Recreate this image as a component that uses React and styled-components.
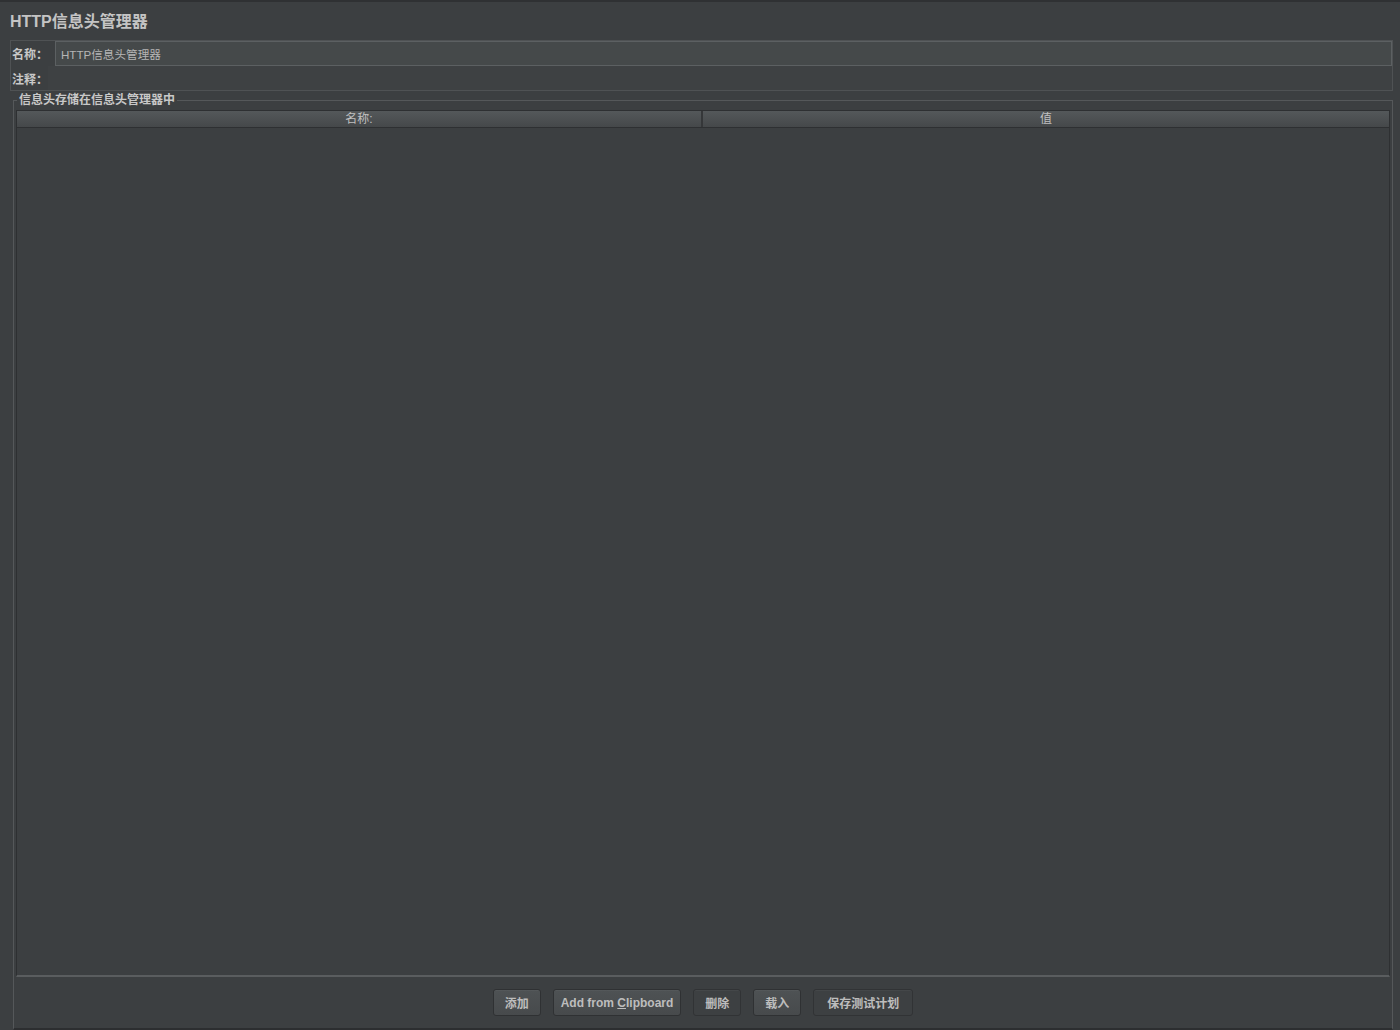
import React from "react";
import styled, { createGlobalStyle } from "styled-components";

const GlobalStyle = createGlobalStyle`
  html, body {
    margin: 0;
    padding: 0;
    background: #3c3f41;
  }
  * {
    box-sizing: border-box;
  }
`;

const FONT = `"Liberation Sans", "Noto Sans CJK SC", sans-serif`;

const Page = styled.div`
  width: 1400px;
  height: 1030px;
  background: #3c3f41;
  border-top: 2px solid #2f3133;
  padding: 0 7px 0 10px;
  display: flex;
  flex-direction: column;
  font-family: ${FONT};
  font-size: 12px;
  color: #bbbbbb;
  overflow: hidden;
`;

const Title = styled.h1`
  margin: 0;
  height: 38px;
  padding-top: 10px;
  font-size: 16px;
  line-height: 20px;
  font-weight: bold;
  color: #c4c4c4;
`;

const NamePanel = styled.div`
  width: 1383px;
  border: 1px solid #4f5254;
  display: flex;
  flex-direction: column;
`;

const FieldRow = styled.div`
  display: flex;
  align-items: center;
  height: ${(p) => p.$h}px;
`;

const Label = styled.span`
  font-weight: bold;
  color: #c8c8c8;
  width: ${(p) => p.$w}px;
  flex: none;
  padding-left: 1px;
`;

const Field = styled.div`
  flex: 1;
  height: 100%;
  display: flex;
  align-items: center;
  padding-left: 5px;
  font-size: 11.6px;
  color: #b5b5b5;
  background: ${(p) => (p.$boxed ? "#45494a" : "#3e4143")};
  border: 1px solid ${(p) => (p.$boxed ? "#5c6062" : "transparent")};
`;

const Group = styled.fieldset`
  margin: 2px 0 0 3px;
  padding: 4px 2px 0 2px;
  width: 1380px;
  flex: 1;
  border: 1px solid #55585a;
  border-bottom: 2px solid #2c2e30;
  display: flex;
  flex-direction: column;
  min-height: 0;
`;

const Legend = styled.legend`
  padding: 0 2px;
  margin-left: 1px;
  font-weight: bold;
  color: #c8c8c8;
  font-size: 12px;
  line-height: 14px;
`;

const Table = styled.div`
  height: 867px;
  border: 1px solid #2e3032;
  border-bottom: 2px solid #5a5d5f;
  display: flex;
  flex-direction: column;
  margin-top: -1px;
`;

const HeaderRow = styled.div`
  display: grid;
  grid-template-columns: 684px 1fr;
  height: 17px;
  background: linear-gradient(#54585a, #45484a);
  border-bottom: 1px solid #2e3032;
`;

const HeaderCell = styled.div`
  text-align: center;
  line-height: 16px;
  color: #c0c0c0;
  border-left: ${(p) => (p.$first ? "none" : "2px solid #353739")};
`;

const TableBody = styled.div`
  flex: 1;
  background: #3c3f41;
`;

const ButtonBar = styled.div`
  height: 49px;
  display: flex;
  justify-content: center;
  align-items: center;
  gap: 12px;
  padding-top: 2px;
`;

const Button = styled.button`
  height: 27px;
  padding: 0 ${(p) => p.$pad || 11}px;
  font-family: ${FONT};
  font-size: 12px;
  font-weight: bold;
  color: #bdbdbd;
  background: ${(p) => (p.$dark ? "#3d4042" : "linear-gradient(#4e5254, #474a4c)")};
  border: 1px solid ${(p) => (p.$dark ? "#313335" : "#2f3133")};
  border-radius: 3px;
  box-shadow: inset 0 1px 0 rgba(255, 255, 255, 0.04);
`;

const Mnemonic = styled.span`
  text-decoration: underline;
`;

export default function App() {
  return (
    <>
      <GlobalStyle />
      <Page>
        <Title>HTTP信息头管理器</Title>
        <NamePanel>
          <FieldRow $h={25}>
            <Label $w={44}>名称：</Label>
            <Field $boxed>HTTP信息头管理器</Field>
          </FieldRow>
          <FieldRow $h={24}>
            <Label $w={37}>注释：</Label>
            <Field />
          </FieldRow>
        </NamePanel>
        <Group>
          <Legend>信息头存储在信息头管理器中</Legend>
          <Table>
            <HeaderRow>
              <HeaderCell $first>名称:</HeaderCell>
              <HeaderCell>值</HeaderCell>
            </HeaderRow>
            <TableBody />
          </Table>
          <ButtonBar>
            <Button>添加</Button>
            <Button $pad={7}>
              Add from <Mnemonic>C</Mnemonic>lipboard
            </Button>
            <Button $dark>删除</Button>
            <Button>载入</Button>
            <Button $dark $pad={13}>保存测试计划</Button>
          </ButtonBar>
        </Group>
      </Page>
    </>
  );
}
